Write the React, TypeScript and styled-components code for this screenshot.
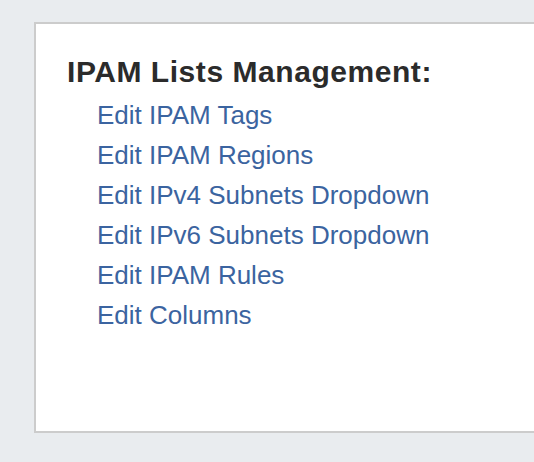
import React from "react";
import styled, { createGlobalStyle } from "styled-components";

const Global = createGlobalStyle`
  html, body { margin: 0; padding: 0; }
  body {
    background: #e9ecef;
    font-family: "Liberation Sans", Arial, Helvetica, sans-serif;
    overflow: hidden;
  }
`;

const Page = styled.div`
  padding: 22px 0 0 34px;
  width: 534px;
  height: 462px;
  box-sizing: border-box;
  overflow: hidden;
`;

const Panel = styled.section`
  width: 560px;
  height: 411px;
  box-sizing: border-box;
  background: #ffffff;
  border: 2px solid #cccccc;
  padding: 28px 0 0 31px;
`;

const Heading = styled.h2`
  margin: 0 0 3px;
  font-size: 30px;
  font-weight: bold;
  letter-spacing: 0.55px;
  color: #2b2b2b;
  line-height: 40px;
`;

const LinkList = styled.ul`
  list-style: none;
  margin: 0;
  padding: 0 0 0 30px;
`;

const Item = styled.li`
  line-height: 40px;
  font-size: 26px;
`;

const Link = styled.a`
  color: #3b64a0;
  text-decoration: none;
`;

const links = [
  "Edit IPAM Tags",
  "Edit IPAM Regions",
  "Edit IPv4 Subnets Dropdown",
  "Edit IPv6 Subnets Dropdown",
  "Edit IPAM Rules",
  "Edit Columns",
];

export default function App() {
  return (
    <>
      <Global />
      <Page>
        <Panel>
          <Heading>IPAM Lists Management:</Heading>
          <LinkList>
            {links.map((l) => (
              <Item key={l}>
                <Link href="#">{l}</Link>
              </Item>
            ))}
          </LinkList>
        </Panel>
      </Page>
    </>
  );
}
